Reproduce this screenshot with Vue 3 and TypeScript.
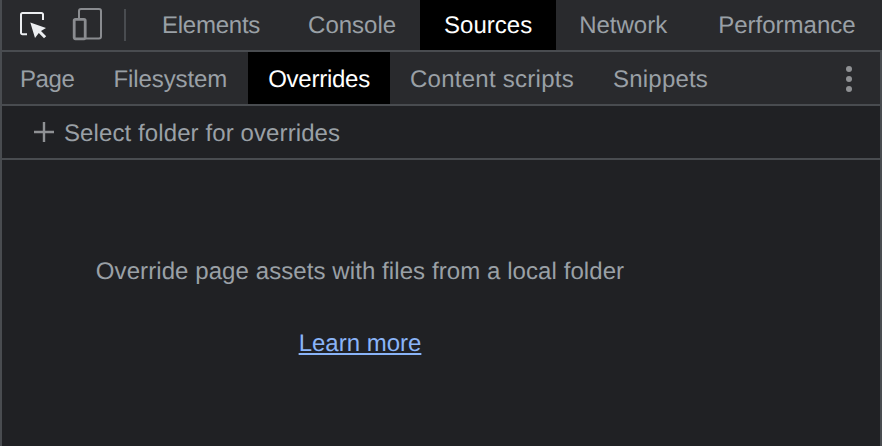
<script setup lang="ts">
const mainTabs = ['Elements', 'Console', 'Sources', 'Network', 'Performance']
const subTabs = ['Page', 'Filesystem', 'Overrides', 'Content scripts', 'Snippets']
const activeMain = 'Sources'
const activeSub = 'Overrides'
</script>

<template>
  <div class="devtools">
    <header class="main-bar">
      <button class="tool inspect" aria-label="Select an element">
        <svg width="30" height="30" viewBox="0 0 30 30">
          <path d="M9 24.200H4.500a1.500 1.500 0 0 1-1.500-1.500V4.500A1.500 1.500 0 0 1 4.500 3h19a1.500 1.500 0 0 1 1.500 1.500V10" fill="none" stroke="#eceef1" stroke-width="2" />
          <path d="M12.300 12.500 28 18l-5 3 5.200 5.200-2.200 2-5.200-5.200-3.800 5z" fill="#eceef1" />
        </svg>
      </button>
      <button class="tool device" aria-label="Toggle device toolbar">
        <svg width="30" height="34" viewBox="0 0 30 34">
          <path d="M7 10V3a2 2 0 0 1 2-2h18a2 2 0 0 1 2 2v25.500a2 2 0 0 1-2 2H14" fill="none" stroke="#8a8c90" stroke-width="2" />
          <rect x="2.200" y="11.300" width="11" height="19.500" rx="1.200" fill="none" stroke="#8a8c90" stroke-width="2.800" />
        </svg>
      </button>
      <span class="divider"></span>
      <nav class="tabs main-tabs">
        <span v-for="tab in mainTabs" :key="tab" class="tab" :class="{ active: tab === activeMain }">{{ tab }}</span>
      </nav>
    </header>

    <div class="sub-bar">
      <nav class="tabs sub-tabs">
        <span v-for="tab in subTabs" :key="tab" class="tab" :class="{ active: tab === activeSub }">{{ tab }}</span>
      </nav>
      <button class="more" aria-label="More tabs"><i></i><i></i><i></i></button>
    </div>

    <div class="action-bar">
      <svg class="plus" width="20" height="20" viewBox="0 0 20 20">
        <path d="M10 0v20M0 10h20" stroke="#8f9194" stroke-width="2.400" fill="none" />
      </svg>
      <span>Select folder for overrides</span>
    </div>

    <main class="empty">
      <div class="empty-body">
        <p>Override page assets with files from a local folder</p>
        <a href="#">Learn more</a>
      </div>
    </main>
  </div>
</template>

<style>
html,
body {
  margin: 0;
  background: #202124;
}
</style>

<style scoped>
.devtools {
  width: 882px;
  height: 446px;
  box-sizing: border-box;
  border-left: 2px solid #494c50;
  display: flex;
  flex-direction: column;
  overflow: hidden;
  background: #202124;
  color: #9aa0a6;
  font-family: "Liberation Sans", Arial, sans-serif;
  font-size: 24px;
  text-rendering: geometricPrecision;
}

button {
  border: 0;
  padding: 0;
  background: none;
  display: flex;
}

.main-bar {
  height: 52px;
  box-sizing: border-box;
  flex: none;
  display: flex;
  align-items: center;
  background: #292a2d;
  border-bottom: 2px solid #494c50;
}

.inspect {
  margin-left: 16px;
}

.device {
  margin-left: 24px;
}

.divider {
  width: 2px;
  height: 32px;
  margin-left: 22px;
  background: #494c50;
}

.tabs {
  display: flex;
  align-self: stretch;
}

.tab {
  display: flex;
  align-items: center;
  padding: 2px 24px 0;
  white-space: nowrap;
}

.tab.active {
  background: #000;
  color: #fff;
}

.main-tabs {
  margin-left: 12px;
}

.main-tabs .tab:nth-child(1) {
  letter-spacing: -0.25px;
}

.main-tabs .tab:nth-child(4) {
  padding-left: 23px;
  padding-right: 27px;
}

.sub-bar {
  height: 54px;
  box-sizing: border-box;
  flex: none;
  display: flex;
  align-items: center;
  justify-content: space-between;
  background: #292a2d;
  border-bottom: 2px solid #494c50;
  border-right: 2px solid #494c50;
}

.sub-tabs {
  margin-left: -2px;
}

.sub-tabs .tab {
  padding: 4px 20px 0;
}

.sub-tabs .tab:nth-child(1) {
  letter-spacing: -0.4px;
  padding-right: 19px;
}

.sub-tabs .tab:nth-child(2) {
  letter-spacing: -0.1px;
  padding-right: 21px;
}

.sub-tabs .tab:nth-child(3) {
  letter-spacing: -0.25px;
}

.sub-tabs .tab:nth-child(4) {
  letter-spacing: 0.27px;
  padding-right: 19px;
}

.sub-tabs .tab:nth-child(5) {
  letter-spacing: 0.2px;
}

.more {
  flex-direction: column;
  gap: 4px;
  margin: 2px 28px 0 0;
}

.more i {
  width: 6px;
  height: 6px;
  border-radius: 50%;
  background: #8f9194;
}

.action-bar {
  height: 54px;
  box-sizing: border-box;
  flex: none;
  display: flex;
  align-items: center;
  gap: 10px;
  padding-left: 32px;
  border-bottom: 2px solid #494c50;
  border-right: 2px solid #494c50;
}

.action-bar span {
  padding-top: 4px;
  letter-spacing: 0.1px;
}

.empty {
  flex: 1;
  border-right: 2px solid #494c50;
}

.empty-body {
  width: 528px;
  margin-left: 94px;
  display: flex;
  flex-direction: column;
  align-items: center;
}

.empty p {
  margin: 98px 0 0;
  line-height: 28px;
  white-space: nowrap;
  letter-spacing: 0.08px;
}

.empty a {
  margin-top: 44px;
  line-height: 28px;
  color: #8ab4f8;
  text-decoration: underline;
}
</style>
